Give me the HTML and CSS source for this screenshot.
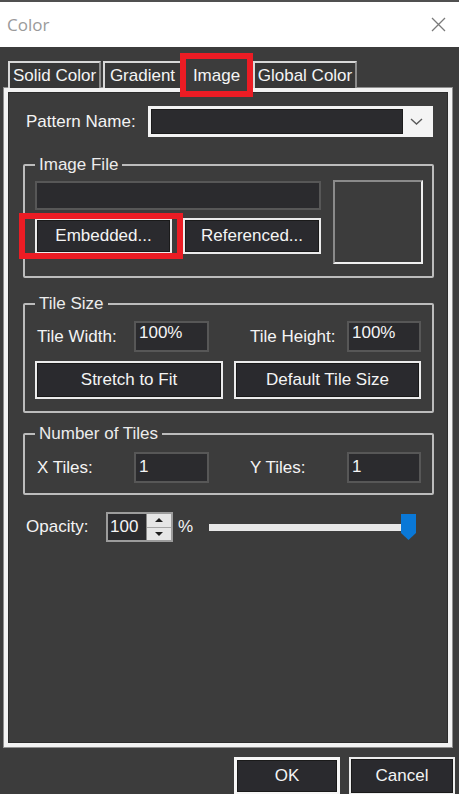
FILE: index.html
```html
<!DOCTYPE html>
<html lang="en">

<head>
    <meta charset="UTF-8">
    <meta name="viewport" content="width=device-width, initial-scale=1.0">
    <title>Color</title>
    <link rel="stylesheet" href="styles.css">
</head>

<body>
    <div class="titlebar">
        <span class="title">Color</span>
        <svg class="close" width="15" height="15" viewBox="0 0 15 15">
            <path d="M1 1 L14 14 M14 1 L1 14" stroke="#7a7a7a" stroke-width="1.3" fill="none" />
        </svg>
    </div>

    <div class="dialog">
        <div class="tabs">
            <div class="tab solid">Solid Color</div>
            <div class="tab gradient">Gradient</div>
            <div class="tab image active">Image<span class="highlight tab-mark"></span></div>
            <div class="tab global">Global Color</div>
        </div>

        <div class="panel">
            <div class="pattern-row">
                <span class="row-label">Pattern Name:</span>
                <div class="combo">
                    <div class="combo-value"></div>
                    <div class="combo-arrow">
                        <svg width="13" height="7" viewBox="0 0 13 7">
                            <path d="M1 1 L6.5 6 L12 1" stroke="#5a5a5a" stroke-width="1.4" fill="none" />
                        </svg>
                    </div>
                </div>
            </div>

            <fieldset class="group image-file">
                <legend>Image File</legend>
                <div class="image-file-body">
                    <div class="file-col">
                        <div class="text-box path"></div>
                        <div class="button-pair">
                            <button class="win-btn embedded">Embedded...<span class="highlight btn-mark"></span></button>
                            <button class="win-btn referenced">Referenced...</button>
                        </div>
                    </div>
                    <div class="preview"></div>
                </div>
            </fieldset>

            <fieldset class="group tile-size">
                <legend>Tile Size</legend>
                <div class="field-row">
                    <span class="field-label">Tile Width:</span>
                    <div class="text-box field wide top">100%</div>
                    <span class="field-label second">Tile Height:</span>
                    <div class="text-box field top">100%</div>
                </div>
                <div class="button-pair tile-buttons">
                    <button class="win-btn stretch">Stretch to Fit</button>
                    <button class="win-btn default-size">Default Tile Size</button>
                </div>
            </fieldset>

            <fieldset class="group tile-count">
                <legend>Number of Tiles</legend>
                <div class="field-row">
                    <span class="field-label">X Tiles:</span>
                    <div class="text-box field wide">1</div>
                    <span class="field-label second">Y Tiles:</span>
                    <div class="text-box field">1</div>
                </div>
            </fieldset>

            <div class="opacity-row">
                <span class="opacity-label">Opacity:</span>
                <div class="spinner">
                    <div class="spinner-value">100</div>
                    <div class="spinner-arrows">
                        <div class="spin"><span class="arrow-up"></span></div>
                        <div class="spin"><span class="arrow-down"></span></div>
                    </div>
                </div>
                <span class="percent">%</span>
                <div class="slider">
                    <div class="track"></div>
                    <svg class="thumb" width="15" height="26" viewBox="0 0 15 26">
                        <path d="M0 0 H15 V19 L7.5 26 L0 19 Z" fill="#0a78d7" />
                    </svg>
                </div>
            </div>
        </div>

        <div class="dialog-buttons">
            <button class="win-btn default">OK</button>
            <button class="win-btn">Cancel</button>
        </div>
    </div>
</body>

</html>
```

FILE: styles.css
```css
* {
    box-sizing: border-box;
}

body {
    margin: 0;
    height: 794px;
    overflow: hidden;
    background-color: #3c3c3c;
    font-family: "Liberation Sans", Arial, sans-serif;
    font-size: 17px;
    color: #f4f4f4;
}

button {
    font: inherit;
    color: inherit;
}

/* window title */

.titlebar {
    height: 47px;
    background-color: #ffffff;
    border-top: 2px solid #505050;
    display: flex;
    align-items: center;
    justify-content: space-between;
    padding: 0 13px 0 7px;
}

.title {
    font-family: "Open Sans", sans-serif;
    font-size: 17px;
    color: #9a9a9a;
}

/* tabs */

.dialog {
    padding-top: 14px;
}

.tabs {
    display: flex;
    align-items: flex-start;
    height: 27px;
    padding-left: 8px;
    position: relative;
    z-index: 1;
}

.tab {
    height: 27px;
    border: 2px solid;
    border-color: #d8d8d8 #8c8c8c transparent #d8d8d8;
    border-bottom: 0;
    background-color: #373737;
    text-align: center;
    line-height: 25px;
    white-space: nowrap;
}

.tab.solid {
    width: 93px;
}

.tab.gradient {
    width: 77px;
    margin-left: 2px;
    border-right: 0;
}

.tab.image {
    width: 73px;
    height: 31px;
    border: 0;
    padding-top: 2px;
    background-color: #3c3c3c;
    position: relative;
}

.tab.global {
    width: 104px;
}

/* red annotation frames */

.highlight {
    position: absolute;
    border: 6px solid #ec1c24;
    pointer-events: none;
}

.tab-mark {
    top: -8px;
    left: 0;
    right: 0;
    bottom: -5px;
}

.btn-mark {
    top: -7px;
    left: -18px;
    right: -13px;
    bottom: -7px;
}

/* tab page */

.panel {
    margin: 0 7px 0 4px;
    height: 659px;
    border: 4px solid #f2f2f2;
    box-shadow: 0 0 0 1px #8f8f8f, inset 0 0 0 1px #2c2c2c;
    padding: 14px 14px 0 15px;
}

.pattern-row {
    display: flex;
    align-items: center;
    padding-left: 3px;
}

.combo {
    display: flex;
    width: 285px;
    height: 31px;
    margin-left: auto;
    margin-right: 1px;
    border: 3px solid #f4f4f4;
    background-color: #2b2b2e;
}

.combo-value {
    flex: 1;
    border: 1px solid #1c1c1c;
}

.combo-arrow {
    width: 27px;
    display: flex;
    align-items: center;
    justify-content: center;
    background-color: #f4f4f4;
}

.group {
    margin: 0;
    min-width: 0;
    border: 2px solid #bcbcbc;
    border-radius: 2px;
    padding: 0 11px 0 10px;
}

.group legend {
    padding: 0 4px;
    line-height: 19px;
    color: #ececec;
}

.text-box {
    background-color: #2b2b2e;
    border: 2px solid #575757;
    padding: 2px 3px 0;
    line-height: 20px;
}

.win-btn {
    height: 36px;
    padding: 0;
    border: 2px solid #ececec;
    box-shadow: inset 0 0 0 1px #1a1a1a;
    background-color: #2a2a2e;
    text-align: center;
    cursor: pointer;
}

.button-pair {
    display: flex;
    gap: 11px;
}

/* image file */

.image-file {
    margin-top: 18px;
    padding: 7px 9px 12px 10px;
}

.image-file-body {
    display: flex;
    gap: 12px;
}

.file-col {
    width: 286px;
    display: flex;
    flex-direction: column;
    gap: 8px;
}

.text-box.path {
    height: 29px;
}

.win-btn.embedded {
    width: 137px;
    position: relative;
}

.win-btn.referenced {
    width: 138px;
}

.preview {
    width: 90px;
    height: 84px;
    margin-top: -1px;
    border: 2px solid;
    border-color: #8a8a8a #f0f0f0 #f0f0f0 #8a8a8a;
}

/* tile size and count */

.tile-size {
    margin-top: 16px;
    padding-top: 8px;
    padding-bottom: 12px;
}

.tile-count {
    margin-top: 11px;
    padding-top: 9px;
    padding-bottom: 10px;
}

.field-row {
    display: flex;
    align-items: center;
}

.field-label {
    width: 99px;
    padding-left: 2px;
}

.field-label.second {
    width: 97px;
    margin-left: auto;
    padding-left: 0;
}

.text-box.field {
    width: 74px;
    height: 31px;
    padding-top: 3px;
}

.text-box.field.wide {
    width: 75px;
}

.text-box.field.top {
    padding-top: 0;
}

.tile-buttons {
    margin-top: 9px;
}

.tile-buttons .win-btn {
    height: 38px;
}

.win-btn.stretch {
    width: 188px;
}

.win-btn.default-size {
    width: 187px;
}

/* opacity */

.opacity-row {
    display: flex;
    align-items: center;
    margin-top: 17px;
    padding-left: 3px;
}

.opacity-label {
    width: 80px;
}

.spinner {
    display: flex;
    width: 67px;
    height: 30px;
    border: 2px solid #9c9c9c;
    background-color: #2b2b2e;
}

.spinner-value {
    width: 38px;
    padding-left: 2px;
    line-height: 26px;
}

.spinner-arrows {
    flex: 1;
    display: flex;
    flex-direction: column;
    background-color: #e6e6e6;
    border-left: 1px solid #8a8a8a;
}

.spin {
    flex: 1;
    display: flex;
    align-items: center;
    justify-content: center;
}

.spin + .spin {
    border-top: 1px solid #a6a6a6;
}

.arrow-up,
.arrow-down {
    width: 0;
    height: 0;
    border-left: 4px solid transparent;
    border-right: 4px solid transparent;
}

.arrow-up {
    border-bottom: 4px solid #1e1e1e;
}

.arrow-down {
    border-top: 4px solid #1e1e1e;
}

.percent {
    width: 36px;
    padding-left: 5px;
}

.slider {
    position: relative;
    width: 207px;
    height: 30px;
    display: flex;
    align-items: center;
}

.track {
    width: 196px;
    height: 7px;
    background-color: #e8e8e8;
}

.thumb {
    position: absolute;
    right: 0;
    top: 2px;
}

/* ok / cancel */

.dialog-buttons {
    display: flex;
    justify-content: flex-end;
    gap: 9px;
    margin-top: 10px;
    padding-right: 4px;
}

.dialog-buttons .win-btn {
    width: 106px;
    height: 38px;
}

.win-btn.default {
    border-width: 3px;
    border-color: #f6f6f6;
}
```
